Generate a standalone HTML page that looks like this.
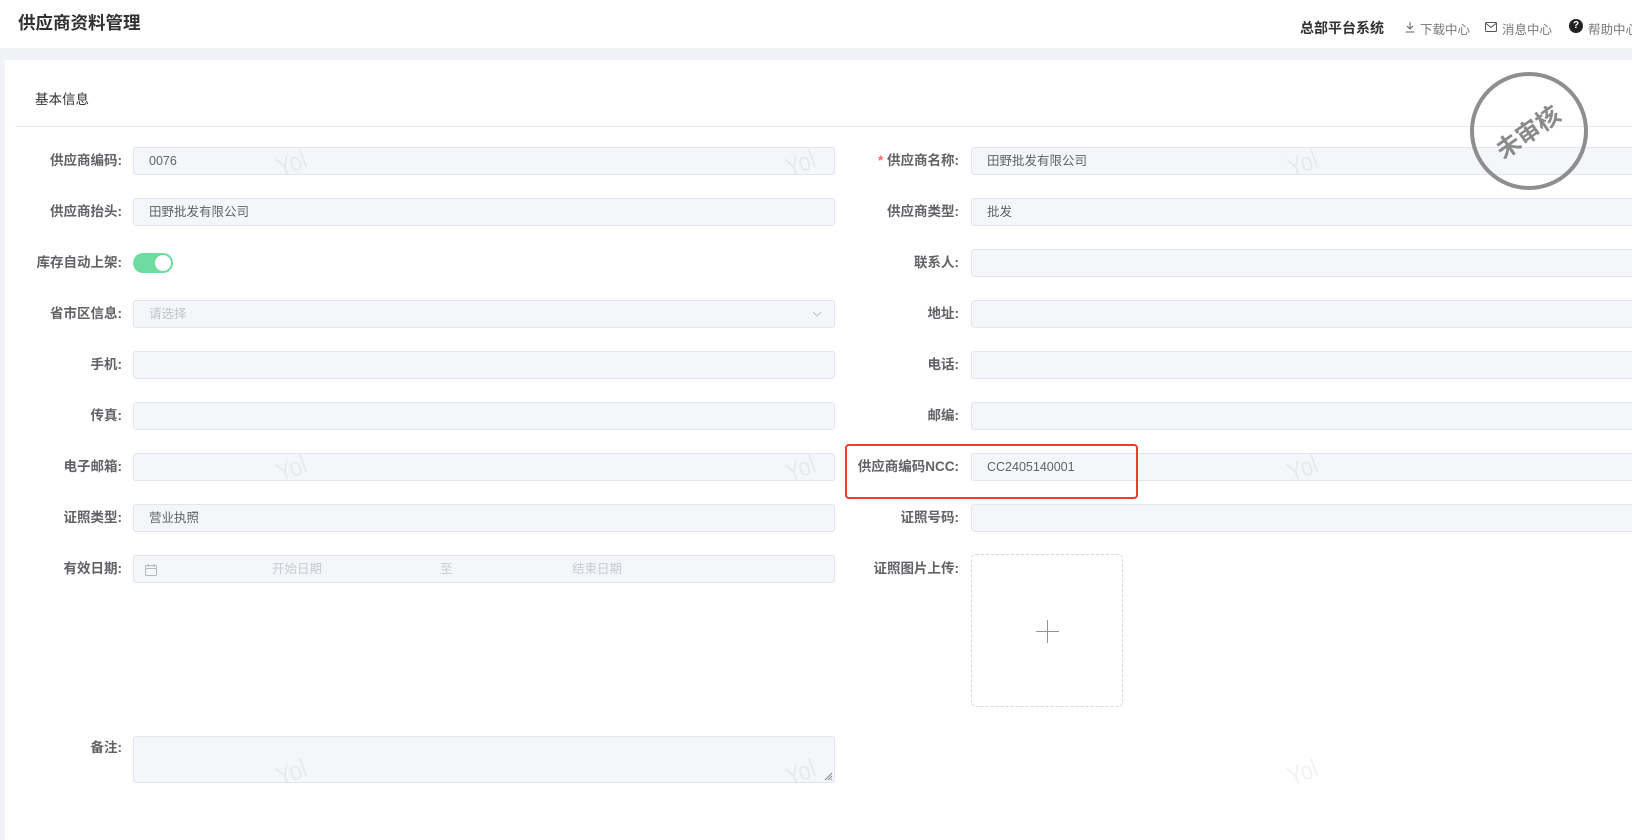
<!DOCTYPE html>
<html><head><meta charset="utf-8"><style>
*{margin:0;padding:0;box-sizing:border-box}
body{width:1632px;height:828px;overflow:hidden;background:#f0f2f5;font-family:"Liberation Sans","Noto Sans CJK SC",sans-serif;position:relative;color:#606266}
.hdr{position:absolute;left:0;top:0;width:1632px;height:48px;background:#fff}
.card{position:absolute;left:5px;top:60px;width:1640px;height:780px;background:#fff}
.a{position:absolute;white-space:nowrap}
.lbl{position:absolute;font-size:13.5px;font-weight:bold;color:#606266;text-align:right;white-space:nowrap;line-height:20px}
.inp{position:absolute;height:28px;background:#f5f6fa;border:1px solid #e2e5ec;border-radius:3px;font-size:12.5px;color:#606266;line-height:26px;padding-left:15px;white-space:nowrap}
.wm{position:absolute;font-size:26px;color:rgba(0,0,0,0.05);transform:rotate(-20deg) scaleX(0.85);font-family:"Liberation Sans",sans-serif}
</style></head><body>
<div class="hdr">
 <div class="a" style="left:18px;top:10px;font-size:17.5px;font-weight:bold;color:#303133">供应商资料管理</div>
 <div class="a" style="left:1300px;top:18px;font-size:14px;font-weight:bold;color:#303133">总部平台系统</div>
 <svg class="a" style="left:1404px;top:21px" width="12" height="12" viewBox="0 0 12 12"><path d="M6 1v7M3 5l3 3 3-3M1.5 11h9" stroke="#666" fill="none" stroke-width="1"/></svg>
 <div class="a" style="left:1420px;top:19px;font-size:12.5px;color:#777">下载中心</div>
 <svg class="a" style="left:1485px;top:22px" width="12" height="10" viewBox="0 0 12 10"><rect x="0.5" y="0.5" width="11" height="9" rx="1" stroke="#555" fill="none"/><path d="M1 1.5l5 4 5-4" stroke="#555" fill="none"/></svg>
 <div class="a" style="left:1502px;top:19px;font-size:12.5px;color:#777">消息中心</div>
 <div class="a" style="left:1569px;top:19px;width:14px;height:14px;border-radius:50%;background:#222;color:#fff;font-size:10px;font-weight:bold;text-align:center;line-height:14px">?</div>
 <div class="a" style="left:1588px;top:19px;font-size:12.5px;color:#777">帮助中心</div>
</div>
<div class="card"></div>
<div class="a" style="left:35px;top:88px;font-size:13.5px;color:#303133">基本信息</div>
<div class="a" style="left:15px;top:126px;width:1620px;height:1px;background:#e8eaee"></div>

<div class="lbl" style="right:1510px;top:151px">供应商编码:</div><div class="inp" style="left:133px;top:147px;width:702px">0076</div>
<div class="lbl" style="right:1510px;top:202px">供应商抬头:</div><div class="inp" style="left:133px;top:198px;width:702px">田野批发有限公司</div>
<div class="lbl" style="right:1510px;top:253px">库存自动上架:</div>
<div class="a" style="left:133px;top:253px;width:40px;height:20px;border-radius:10px;background:#6fdc9f"><div class="a" style="left:22px;top:2px;width:16px;height:16px;border-radius:50%;background:#fff"></div></div>
<div class="lbl" style="right:1510px;top:304px">省市区信息:</div><div class="inp" style="left:133px;top:300px;width:702px;color:#c0c4cc">请选择<svg class="a" style="right:12px;top:10px" width="10" height="6" viewBox="0 0 10 6"><path d="M1 1l4 4 4-4" stroke="#c0c4cc" fill="none"/></svg></div>
<div class="lbl" style="right:1510px;top:355px">手机:</div><div class="inp" style="left:133px;top:351px;width:702px"></div>
<div class="lbl" style="right:1510px;top:406px">传真:</div><div class="inp" style="left:133px;top:402px;width:702px"></div>
<div class="lbl" style="right:1510px;top:457px">电子邮箱:</div><div class="inp" style="left:133px;top:453px;width:702px"></div>
<div class="lbl" style="right:1510px;top:508px">证照类型:</div><div class="inp" style="left:133px;top:504px;width:702px">营业执照</div>
<div class="lbl" style="right:1510px;top:559px">有效日期:</div><div class="inp" style="left:133px;top:555px;width:702px;color:#c8cbd2"><svg class="a" style="left:11px;top:8px" width="12" height="12" viewBox="0 0 12 12"><rect x="0.5" y="1.5" width="11" height="10" rx="1" stroke="#b5b8bf" fill="none"/><path d="M0.5 4.5h11M3 0v3M9 0v3" stroke="#b5b8bf"/></svg><span class="a" style="left:138px">开始日期</span><span class="a" style="left:306px">至</span><span class="a" style="left:438px">结束日期</span></div>
<div class="lbl" style="right:1510px;top:738px">备注:</div>
<div class="inp" style="left:133px;top:736px;width:702px;height:47px"><svg class="a" style="right:1px;bottom:1px" width="10" height="10" viewBox="0 0 10 10"><path d="M9 2L2 9M9 5L5 9M9 8L8 9" stroke="#888"/></svg></div>

<div class="lbl" style="right:673px;top:151px"><span style="color:#f56c6c">*</span> 供应商名称:</div><div class="inp" style="left:971px;top:147px;width:700px">田野批发有限公司</div>
<div class="lbl" style="right:673px;top:202px">供应商类型:</div><div class="inp" style="left:971px;top:198px;width:700px">批发</div>
<div class="lbl" style="right:673px;top:253px">联系人:</div><div class="inp" style="left:971px;top:249px;width:700px"></div>
<div class="lbl" style="right:673px;top:304px">地址:</div><div class="inp" style="left:971px;top:300px;width:700px"></div>
<div class="lbl" style="right:673px;top:355px">电话:</div><div class="inp" style="left:971px;top:351px;width:700px"></div>
<div class="lbl" style="right:673px;top:406px">邮编:</div><div class="inp" style="left:971px;top:402px;width:700px"></div>
<div class="lbl" style="right:673px;top:457px">供应商编码NCC:</div><div class="inp" style="left:971px;top:453px;width:700px">CC2405140001</div>
<div class="a" style="left:845px;top:444px;width:293px;height:55px;border:2px solid #f03a2e;border-radius:4px"></div>
<div class="lbl" style="right:673px;top:508px">证照号码:</div><div class="inp" style="left:971px;top:504px;width:700px"></div>
<div class="lbl" style="right:673px;top:559px">证照图片上传:</div>
<div class="a" style="left:971px;top:554px;width:152px;height:153px;border:1px dashed #d4d7de;border-radius:5px"></div>
<div class="a" style="left:1036px;top:631px;width:23px;height:1px;background:#8c939d"></div>
<div class="a" style="left:1047px;top:620px;width:1px;height:23px;background:#8c939d"></div>

<div class="wm" style="left:274px;top:148px">Yol</div>
<div class="wm" style="left:783px;top:148px">Yol</div>
<div class="wm" style="left:1285px;top:148px">Yol</div>
<div class="wm" style="left:274px;top:453px">Yol</div>
<div class="wm" style="left:783px;top:453px">Yol</div>
<div class="wm" style="left:1285px;top:453px">Yol</div>
<div class="wm" style="left:274px;top:757px">Yol</div>
<div class="wm" style="left:783px;top:757px">Yol</div>
<div class="wm" style="left:1285px;top:757px">Yol</div>

<div class="a" style="left:1470px;top:72px;width:118px;height:118px;border:4px solid #8e8e8e;border-radius:50%"></div>
<div class="a" style="left:1468px;top:113px;width:118px;text-align:center;font-size:24px;font-weight:bold;color:#8a8a8a;transform:rotate(-35deg)">未审核</div>
</body></html>
